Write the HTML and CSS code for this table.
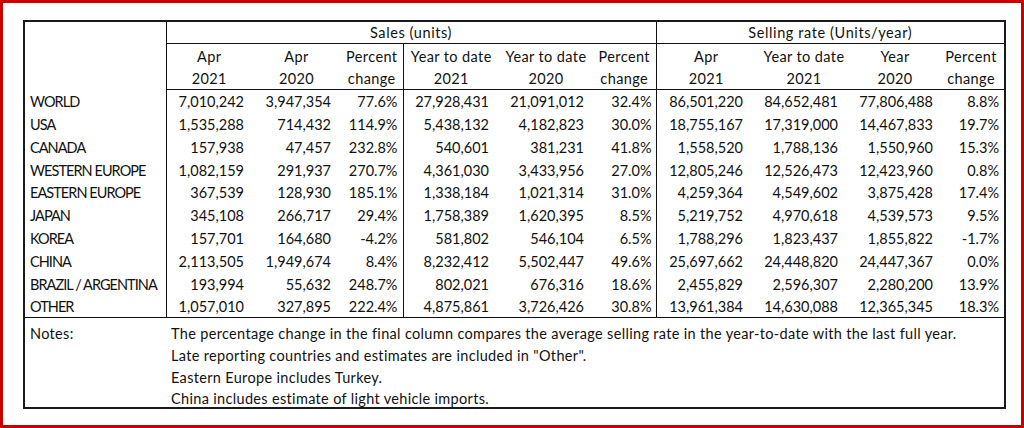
FILE: index.html
```html
<!DOCTYPE html>
<html>
<head>
<meta charset="utf-8">
<link rel="stylesheet" href="styles.css">
</head>
<body>
<div class="frame">
<table class="sales">
<colgroup>
<col class="c-label"><col class="c-a"><col class="c-b"><col class="c-c"><col class="c-d"><col class="c-e"><col class="c-f"><col class="c-g"><col class="c-h"><col class="c-i"><col class="c-j">
</colgroup>
<thead>
<tr>
<th class="label-head" rowspan="3"></th>
<th class="group" colspan="6">Sales (units)</th>
<th class="group sep" colspan="4">Selling rate (Units/year)</th>
</tr>
<tr class="hrow">
<th>Apr</th><th>Apr</th><th>Percent</th><th class="sep">Year to date</th><th>Year to date</th><th>Percent</th><th class="sep">Apr</th><th>Year to date</th><th>Year</th><th>Percent</th>
</tr>
<tr class="hrow last">
<th>2021</th><th>2020</th><th>change</th><th class="sep">2021</th><th>2020</th><th>change</th><th class="sep">2021</th><th>2021</th><th>2020</th><th>change</th>
</tr>
</thead>
<tbody class="data">
<tr><td>WORLD</td><td>7,010,242</td><td>3,947,354</td><td>77.6%</td><td class="sep">27,928,431</td><td>21,091,012</td><td>32.4%</td><td class="sep">86,501,220</td><td>84,652,481</td><td>77,806,488</td><td>8.8%</td></tr>
<tr><td>USA</td><td>1,535,288</td><td>714,432</td><td>114.9%</td><td class="sep">5,438,132</td><td>4,182,823</td><td>30.0%</td><td class="sep">18,755,167</td><td>17,319,000</td><td>14,467,833</td><td>19.7%</td></tr>
<tr><td>CANADA</td><td>157,938</td><td>47,457</td><td>232.8%</td><td class="sep">540,601</td><td>381,231</td><td>41.8%</td><td class="sep">1,558,520</td><td>1,788,136</td><td>1,550,960</td><td>15.3%</td></tr>
<tr><td>WESTERN EUROPE</td><td>1,082,159</td><td>291,937</td><td>270.7%</td><td class="sep">4,361,030</td><td>3,433,956</td><td>27.0%</td><td class="sep">12,805,246</td><td>12,526,473</td><td>12,423,960</td><td>0.8%</td></tr>
<tr><td>EASTERN EUROPE</td><td>367,539</td><td>128,930</td><td>185.1%</td><td class="sep">1,338,184</td><td>1,021,314</td><td>31.0%</td><td class="sep">4,259,364</td><td>4,549,602</td><td>3,875,428</td><td>17.4%</td></tr>
<tr><td>JAPAN</td><td>345,108</td><td>266,717</td><td>29.4%</td><td class="sep">1,758,389</td><td>1,620,395</td><td>8.5%</td><td class="sep">5,219,752</td><td>4,970,618</td><td>4,539,573</td><td>9.5%</td></tr>
<tr><td>KOREA</td><td>157,701</td><td>164,680</td><td>-4.2%</td><td class="sep">581,802</td><td>546,104</td><td>6.5%</td><td class="sep">1,788,296</td><td>1,823,437</td><td>1,855,822</td><td>-1.7%</td></tr>
<tr><td>CHINA</td><td>2,113,505</td><td>1,949,674</td><td>8.4%</td><td class="sep">8,232,412</td><td>5,502,447</td><td>49.6%</td><td class="sep">25,697,662</td><td>24,448,820</td><td>24,447,367</td><td>0.0%</td></tr>
<tr><td>BRAZIL / ARGENTINA</td><td>193,994</td><td>55,632</td><td>248.7%</td><td class="sep">802,021</td><td>676,316</td><td>18.6%</td><td class="sep">2,455,829</td><td>2,596,307</td><td>2,280,200</td><td>13.9%</td></tr>
<tr><td>OTHER</td><td>1,057,010</td><td>327,895</td><td>222.4%</td><td class="sep">4,875,861</td><td>3,726,426</td><td>30.8%</td><td class="sep">13,961,384</td><td>14,630,088</td><td>12,365,345</td><td>18.3%</td></tr>
</tbody>
<tbody class="notes">
<tr class="first"><td>Notes:</td><td colspan="10">The percentage change in the final column compares the average selling rate in the year-to-date with the last full year.</td></tr>
<tr><td></td><td colspan="10">Late reporting countries and estimates are included in "Other".</td></tr>
<tr><td></td><td colspan="10">Eastern Europe includes Turkey.</td></tr>
<tr><td></td><td colspan="10">China includes estimate of light vehicle imports.</td></tr>
</tbody>
</table>
</div>
</body>
</html>
```
FILE: styles.css
```css
html, body {
  margin: 0;
  padding: 0;
  background: #ffffff;
}

.frame {
  width: 1024px;
  height: 428px;
  box-sizing: border-box;
  border: 3px solid #c80000;
  padding: 17px 0 0 20px;
  background: #ffffff;
}

.sales {
  border-collapse: collapse;
  table-layout: fixed;
  width: 981px;
  border: 2px solid #1a1a1a;
  font-family: Lato, "Open Sans", sans-serif;
  font-size: 14.5px;
  color: #111111;
}

.c-label { width: 142px; }
.c-a { width: 86px; }
.c-b { width: 89px; }
.c-c { width: 62px; }
.c-d { width: 96px; }
.c-e { width: 94px; }
.c-f { width: 63px; }
.c-g { width: 100px; }
.c-h { width: 96px; }
.c-i { width: 86px; }
.c-j { width: 67px; }

.sales tr {
  height: 22.8px;
}

.sales th,
.sales td {
  padding: 0;
  line-height: 17px;
  white-space: nowrap;
  font-weight: normal;
  vertical-align: bottom;
  padding-bottom: 2px;
}

.sales th {
  text-align: center;
  letter-spacing: 0.4px;
}

.label-head {
  border-right: 1px solid #111;
}

.group {
  border-bottom: 1px solid #111;
}

.sales .group {
  letter-spacing: 0.6px;
}

.sales .sep {
  border-left: 1px solid #111;
}

.hrow.last th {
  border-bottom: 1px solid #111;
}

.data td {
  text-align: right;
}

.data td:first-child {
  text-align: left;
  padding-left: 5px;
  letter-spacing: -0.95px;
  border-right: 1px solid #111;
}

.data td:nth-child(2) { padding-right: 8px; }
.data td:nth-child(3) { padding-right: 10px; }
.data td:nth-child(4) { padding-right: 5px; }
.data td:nth-child(5) { padding-right: 10px; }
.data td:nth-child(6) { padding-right: 9px; }
.data td:nth-child(7) { padding-right: 4px; }
.data td:nth-child(8) { padding-right: 13px; }
.data td:nth-child(9) { padding-right: 14px; }
.data td:nth-child(10) { padding-right: 5px; }
.data td:nth-child(11) { padding-right: 5px; }

.data tr:last-child td {
  border-bottom: 1px solid #111;
}

.sales .notes tr {
  height: 22px;
}

.sales .notes tr.first {
  height: 24.5px;
}

.sales .notes td {
  text-align: left;
  padding-left: 5px;
  padding-bottom: 0;
  letter-spacing: 0.33px;
}
```
